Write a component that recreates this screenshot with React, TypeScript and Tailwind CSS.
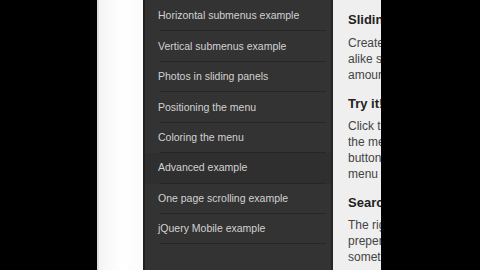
const menuItems = [
  'Horizontal submenus example',
  'Vertical submenus example',
  'Photos in sliding panels',
  'Positioning the menu',
  'Coloring the menu',
  'Advanced example',
  'One page scrolling example',
  'jQuery Mobile example',
];

function Menu() {
  return (
    <nav className="w-[190px] h-full bg-[#333333] border-l-2 border-r-2 border-l-[#202020] border-r-[#262626] pt-[1px]">
      {menuItems.map((item) => (
        <div
          key={item}
          className={
            'h-[30.43px] flex flex-col ' +
            (item === 'Advanced example' ? 'bg-[#2f2f2f]' : '')
          }
        >
          <div className="flex-1 flex items-center pt-[1px] pl-[13px] text-[10.5px] text-[#d2d2d2] whitespace-nowrap">
            {item}
          </div>
          <div className="ml-[15px] mr-[5px] h-px bg-[#262626]" />
        </div>
      ))}
    </nav>
  );
}

function Content() {
  return (
    <div className="w-[48px] h-full bg-[#efefef] overflow-hidden pl-[15px] pt-[11px] text-[#222]">
      <div className="w-[300px]">
        <h2 className="text-[13px] leading-[18px] font-bold">Sliding menus</h2>
        <div className="mt-[6px] text-[12px] leading-[16px] text-[#444]">
          <p>Create app look-</p>
          <p>alike sliding menus with the least</p>
          <p>amount of effort.</p>
        </div>
        <h2 className="mt-[12px] text-[13px] leading-[18px] font-bold">Try it!</h2>
        <div className="mt-[5px] text-[12px] leading-[16px] text-[#444]">
          <p>Click the icon to open</p>
          <p>the menu, or drag the</p>
          <p>button to the right. The</p>
          <p>menu can be closed again.</p>
        </div>
        <h2 className="mt-[12px] text-[13px] leading-[18px] font-bold">Search</h2>
        <div className="mt-[5px] text-[12px] leading-[16px] text-[#444]">
          <p>The right menu has a</p>
          <p>prepended search field,</p>
          <p>something to filter items.</p>
        </div>
      </div>
    </div>
  );
}

export default function App() {
  return (
    <div
      className="w-[480px] h-[270px] flex bg-black overflow-hidden"
      style={{ fontFamily: '"Liberation Sans", Arial, sans-serif' }}
    >
      <div className="w-[97px] h-full bg-black" />
      {/* white page edge */}
      <div className="w-[46px] h-full bg-white border-l-2 border-[#dcdcdc] bg-gradient-to-r from-[#f4f4f4] via-white to-[#fbfbfb]" />
      <Menu />
      <Content />
      <div className="flex-1 h-full bg-black" />
    </div>
  );
}
